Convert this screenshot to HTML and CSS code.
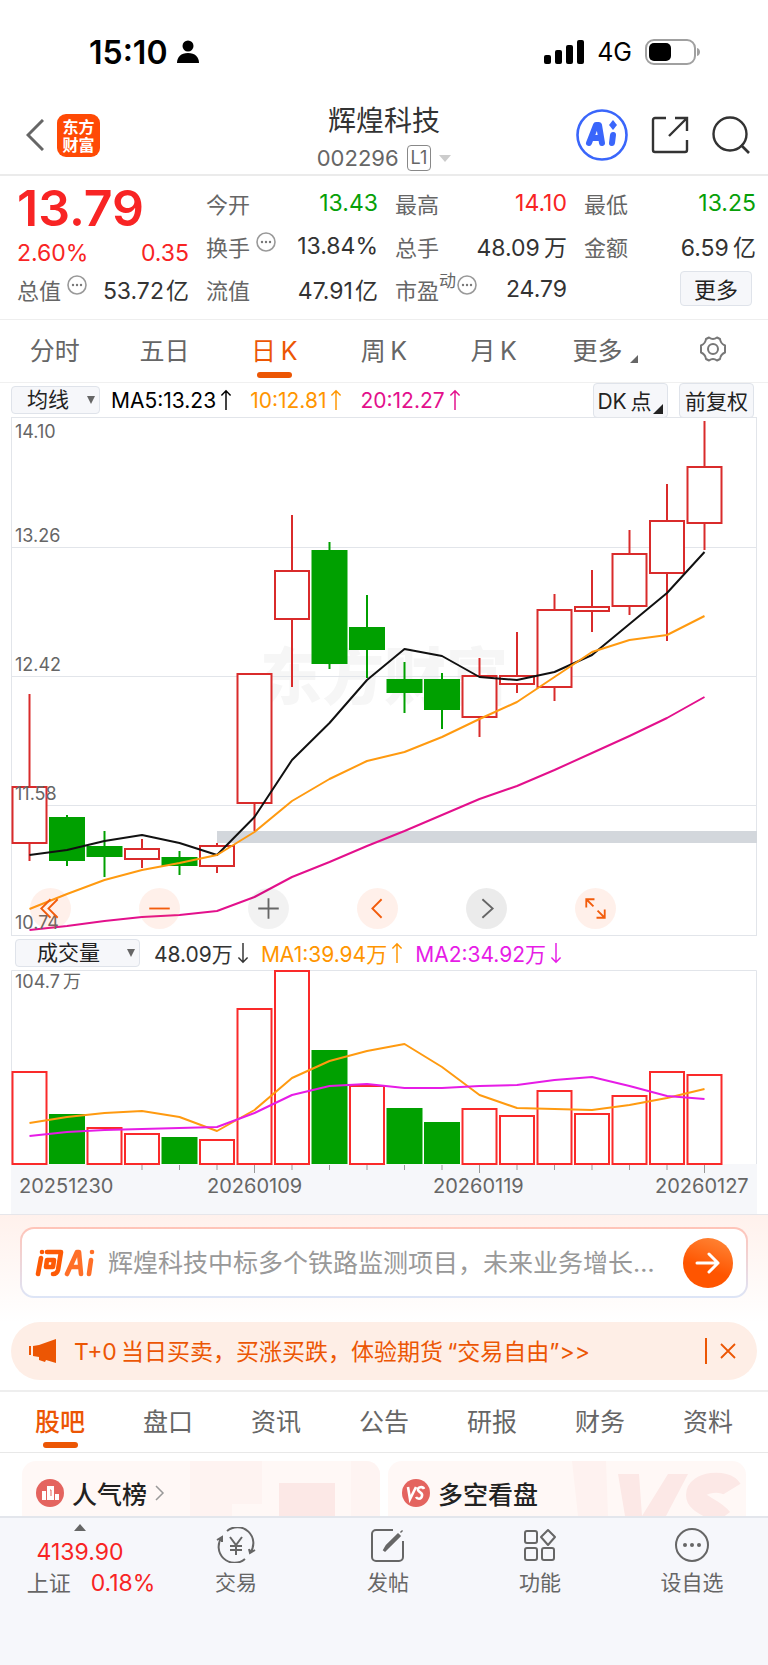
FILE: index.html
```html
<!DOCTYPE html>
<html lang="zh-CN">
<head>
    <meta charset="UTF-8">
    <meta name="viewport" content="width=device-width, initial-scale=1.0">
    <title>辉煌科技 002296</title>
    <link rel="stylesheet" href="styles.css">
</head>
<body>
    <svg class="defs" aria-hidden="true">
        <symbol id="up" viewBox="0 0 12 24"><path d="M6 23V2M1 7l5-5 5 5" fill="none" stroke="currentColor" stroke-width="1.6"/></symbol>
        <symbol id="down" viewBox="0 0 12 24"><path d="M6 1v21M1 17l5 5 5-5" fill="none" stroke="currentColor" stroke-width="1.6"/></symbol>
        <symbol id="dots" viewBox="0 0 20 20"><circle cx="10" cy="10" r="9" fill="none" stroke="#999" stroke-width="1.6"/><g fill="#777"><circle cx="6" cy="10" r="1.2"/><circle cx="10" cy="10" r="1.2"/><circle cx="14" cy="10" r="1.2"/></g></symbol>
    </svg>

    <div class="status">
        <div class="clock">15:10
            <svg width="22" height="24" viewBox="0 0 22 24"><circle cx="11" cy="6" r="5.5"/><path d="M0 23c0-6 4-10 11-10s11 4 11 10z"/></svg>
        </div>
        <div class="signal">
            <svg width="40" height="25" viewBox="0 0 40 25"><rect x="0" y="15" width="7" height="9" rx="2"/><rect x="11" y="10" width="7" height="14" rx="2"/><rect x="22" y="5" width="7" height="19" rx="2"/><rect x="33" y="0" width="7" height="24" rx="2"/></svg>
            <span>4G</span>
            <svg width="56" height="26" viewBox="0 0 56 26"><rect x="1" y="1" width="49" height="24" rx="8" fill="none" stroke="#a0a0a0" stroke-width="2"/><rect x="4" y="4" width="22" height="18" rx="5"/><path d="M52 9c4 1 4 7 0 8z" fill="#a0a0a0"/></svg>
        </div>
    </div>

    <header class="header">
        <div class="header-left">
            <button class="icon-button back" aria-label="返回"><svg width="18" height="32" viewBox="0 0 18 32"><path d="M17 1L2 16l15 15" fill="none" stroke="#666" stroke-width="3"/></svg></button>
            <a class="logo" href="#">东方<br>财富</a>
        </div>
        <div class="header-title">
            <h1>辉煌科技</h1>
            <p>002296 <span class="level">L1</span> <span class="caret-light"></span></p>
        </div>
        <div class="header-right">
            <button class="icon-button" aria-label="Ai">
                <svg width="52" height="52" viewBox="0 0 52 52"><circle cx="26" cy="26" r="24.5" fill="#fff" stroke="#3a66fb" stroke-width="2.6"/><g fill="none" stroke="#3a66fb" stroke-width="6" stroke-linecap="round" stroke-linejoin="round"><path d="M13 34l7-18h3l3 18M17 29h8"/><path d="M37 26l-1 8"/></g><path d="M37 11l4 5-4 5-4-5z" fill="#3a66fb"/></svg>
            </button>
            <button class="icon-button" aria-label="分享">
                <svg width="38" height="38" viewBox="0 0 38 38"><path d="M15 2H4a2 2 0 0 0-2 2v30a2 2 0 0 0 2 2h30a2 2 0 0 0 2-2V24M24 2h12v13M36 2L18 20" fill="none" stroke="#333" stroke-width="2.4"/></svg>
            </button>
            <button class="icon-button" aria-label="搜索">
                <svg width="38" height="38" viewBox="0 0 38 38"><circle cx="18" cy="18" r="16.5" fill="none" stroke="#333" stroke-width="2.4"/><path d="M29 29l8 8" stroke="#333" stroke-width="2.6"/></svg>
            </button>
        </div>
    </header>

    <section class="quote">
        <div class="quote-price">
            <strong>13.79</strong>
            <p><span>2.60%</span><span>0.35</span></p>
        </div>
        <div class="cell"><span>今开</span><b class="green">13.43</b></div>
        <div class="cell"><span>最高</span><b class="red">14.10</b></div>
        <div class="cell"><span>最低</span><b class="green">13.25</b></div>
        <div class="cell"><span>换手<svg class="info"><use href="#dots"/></svg></span><b>13.84%</b></div>
        <div class="cell"><span>总手</span><b>48.09&thinsp;万</b></div>
        <div class="cell"><span>金额</span><b>6.59&thinsp;亿</b></div>
        <div class="cell"><span>总值<svg class="info"><use href="#dots"/></svg></span><b>53.72&hairsp;亿</b></div>
        <div class="cell"><span>流值</span><b>47.91&hairsp;亿</b></div>
        <div class="cell"><span>市盈<sup>动</sup><svg class="info info-tight"><use href="#dots"/></svg></span><b>24.79</b></div>
        <div class="cell cell-more"><button class="box-button more-button">更多</button></div>
    </section>

    <nav class="tabs period-tabs">
        <button>分时</button>
        <button>五日</button>
        <button class="active">日&thinsp;K</button>
        <button>周&thinsp;K</button>
        <button>月&thinsp;K</button>
        <button class="has-corner">更多</button>
        <button aria-label="设置">
            <svg width="30" height="30" viewBox="0 0 30 30" fill="none" stroke="#777" stroke-width="2" stroke-linejoin="round"><path d="M11 3.500Q15 6.500 19 3.500L22 5Q22.500 9.500 27 11.500V18.500Q22.500 20.500 22 25L19 26.500Q15 23.500 11 26.500L8 25Q7.500 20.500 3 18.500V11.500Q7.500 9.500 8 5Z"/><circle cx="15" cy="15" r="5"/></svg>
        </button>
    </nav>

    <div class="toolbar">
        <label class="picker picker-ma"><select class="box-button" aria-label="主图指标"><option>均线</option></select></label>
        <span class="ma ma-black">MA5:13.23<svg class="arrow"><use href="#up"/></svg></span>
        <span class="ma ma-orange">10:12.81<svg class="arrow"><use href="#up"/></svg></span>
        <span class="ma ma-pink">20:12.27<svg class="arrow"><use href="#up"/></svg></span>
        <div class="toolbar-right">
            <button class="box-button corner-button">DK&thinsp;点</button>
            <button class="box-button">前复权</button>
        </div>
    </div>

    <div class="chart">
        <svg id="priceChart" viewBox="0 417 768 519"></svg>
        <div class="chart-buttons">
            <button class="round" aria-label="最早"><svg viewBox="0 0 40 40"><path d="M20 11l-9 9 9 9M27 11l-9 9 9 9"/></svg></button>
            <button class="round" aria-label="缩小"><svg viewBox="0 0 40 40"><path d="M10 20h20"/></svg></button>
            <button class="round round-grey" aria-label="放大"><svg viewBox="0 0 40 40"><path d="M10 20h20M20 10v20"/></svg></button>
            <button class="round" aria-label="向前"><svg viewBox="0 0 40 40"><path d="M24 11l-9 9 9 9"/></svg></button>
            <button class="round round-dark" aria-label="向后"><svg viewBox="0 0 40 40"><path d="M16 11l10 9-10 9"/></svg></button>
            <button class="round" aria-label="全屏"><svg viewBox="0 0 40 40"><path d="M18 18l-7-7M11 19v-8h8M22 22l7 7M29 21v8h-8"/></svg></button>
        </div>
    </div>

    <div class="toolbar toolbar-volume">
        <label class="picker picker-volume"><select class="box-button" aria-label="副图指标"><option>成交量</option></select></label>
        <span class="ma">48.09万<svg class="arrow"><use href="#down"/></svg></span>
        <span class="ma ma-orange">MA1:39.94万<svg class="arrow"><use href="#up"/></svg></span>
        <span class="ma ma-magenta">MA2:34.92万<svg class="arrow"><use href="#down"/></svg></span>
    </div>

    <div class="chart">
        <svg id="volumeChart" viewBox="0 970 768 244"></svg>
    </div>

    <section class="ask">
        <form class="ask-box">
            <svg class="ask-logo" width="60" height="28" viewBox="0 0 60 28" fill="none" stroke="#fd5a05" stroke-width="4.6" stroke-linecap="round" stroke-linejoin="round">
                <path d="M6 9L3 25M7 3v0M12 3h14l-3 18q-1 4-5 4M12 11h7l-1 7h-7z"/>
                <g stroke="#ff6f28"><path d="M32 25L42 3h2l2 22M37 18h8"/><path d="M56 11l-2 14M57 3v0"/></g>
            </svg>
            <input type="text" aria-label="问Ai" placeholder="辉煌科技中标多个铁路监测项目，未来业务增长…">
            <button type="button" class="send" aria-label="发送"><svg width="26" height="22" viewBox="0 0 26 22"><path d="M2 11h21M14 2l9 9-9 9" fill="none" stroke="#fff" stroke-width="3" stroke-linecap="round" stroke-linejoin="round"/></svg></button>
        </form>
    </section>

    <div class="notice">
        <svg width="27" height="24" viewBox="0 0 27 24" fill="#ec5604"><path d="M0 7h2v9H0zM4 7l6-1L27 0v24l-10-3-1 2-6-2v-3l-6-1z"/></svg>
        <a href="#">T+0&thinsp;当日买卖，买涨买跌，体验期货&thinsp;“交易自由”&gt;&gt;</a>
        <button class="icon-button notice-close" aria-label="关闭"><svg width="16" height="16" viewBox="0 0 16 16"><path d="M1 1l14 14M15 1L1 15" stroke="#ec5604" stroke-width="1.8"/></svg></button>
    </div>

    <nav class="tabs info-tabs">
        <button class="active">股吧</button>
        <button>盘口</button>
        <button>资讯</button>
        <button>公告</button>
        <button>研报</button>
        <button>财务</button>
        <button>资料</button>
    </nav>

    <section class="cards">
        <a class="card" href="#">
            <svg class="card-art" width="190" height="55" viewBox="0 0 190 55"><path d="M0 0h72v43H42v12H0z" fill="#fef3f1"/><path d="M89 22h56v33H89z" fill="#fce8e6"/><path d="M161 0h29v55h-29z" fill="#fef4f2"/></svg>
            <svg width="28" height="28" viewBox="0 0 28 28"><circle cx="14" cy="14" r="14" fill="#e4645f"/><path d="M6 12h4v9H6zM11 7h7v14h-7zM19 15h4v6h-4z" fill="#fff"/><path d="M14 11h1v6" fill="none" stroke="#e4645f"/></svg>
            <span>人气榜</span>
            <svg width="10" height="16" viewBox="0 0 10 16"><path d="M1 1l7 7-7 7" fill="none" stroke="#999" stroke-width="1.5"/></svg>
        </a>
        <a class="card" href="#">
            <svg class="card-art" width="180" height="55" viewBox="0 0 180 55"><path d="M6 0h34l2 55H12z" fill="#fef2f0"/><path d="M52 13h21l3 42H59zM102 13h20L100 55H76z" fill="#fce8e6"/><path d="M166 28c-6-10-36-8-36 6 0 10 18 12 26 23" fill="none" stroke="#fce8e6" stroke-width="20"/></svg>
            <svg width="28" height="28" viewBox="0 0 28 28"><circle cx="14" cy="14" r="14" fill="#e4645f"/><path d="M6 8l2 12 6-12M22 10c-1-3-7-2-6 1s5 2 4 6-5 3-6 1" fill="none" stroke="#fff" stroke-width="2.6"/></svg>
            <span>多空看盘</span>
        </a>
    </section>

    <footer class="bottom">
        <a class="index" href="#">
            <i></i>
            <span class="red">4139.90</span>
            <span class="index-row">上证<span class="red">0.18%</span></span>
        </a>
        <a href="#">
            <svg width="40" height="36" viewBox="0 0 40 36"><path d="M11 4a16 16 0 0 1 23 22M29 32A16 16 0 0 1 6 10M1 13l5-3v5M39 23l-5 3-1-4M14 10l6 8 6-8M20 18v10M14 19h12M14 23h12"/></svg>
            交易
        </a>
        <a href="#">
            <svg width="36" height="36" viewBox="0 0 36 36"><path d="M23 3H6a4 4 0 0 0-4 4v23a4 4 0 0 0 4 4h23a4 4 0 0 0 4-4V14"/><path d="M14 24l3-5L28 8l1 1-11 11zM31 4l1 1" stroke-width="3"/></svg>
            发帖
        </a>
        <a href="#">
            <svg width="36" height="36" viewBox="0 0 36 36"><rect x="3" y="4" width="12" height="12" rx="2"/><rect x="3" y="21" width="12" height="12" rx="2"/><rect x="20" y="21" width="12" height="12" rx="2"/><path d="M26 3l7 7-7 8-7-8z" stroke-linejoin="round"/></svg>
            功能
        </a>
        <a href="#">
            <svg width="36" height="36" viewBox="0 0 36 36"><circle cx="18" cy="18" r="16"/><g fill="#666" stroke="none"><circle cx="11" cy="18" r="2"/><circle cx="18" cy="18" r="2"/><circle cx="25" cy="18" r="2"/></g></svg>
            设自选
        </a>
    </footer>

    <script src="chart.js"></script>
</body>
</html>
```
FILE: styles.css
```css
* {
    box-sizing: border-box;
}
body {
    margin: 0;
    background: #fff;
    color: #333;
    font-family: Inter, 'Noto Sans CJK SC', sans-serif;
    font-size: 22px;
}
h1, p {
    margin: 0;
}
a {
    color: inherit;
    text-decoration: none;
}
button, select, input {
    font-family: inherit;
    color: inherit;
    margin: 0;
}
svg {
    display: block;
    flex-shrink: 0;
}
.defs {
    position: absolute;
    width: 0;
    height: 0;
}
.red {
    color: #f82424;
}
.green {
    color: #08a008;
}

/* status bar */
.status {
    display: flex;
    justify-content: space-between;
    align-items: center;
    height: 104px;
    padding: 0 67px 0 89px;
    color: #000;
}
.clock, .signal {
    display: flex;
    align-items: center;
}
.clock {
    gap: 9px;
    font-size: 32px;
    font-weight: 600;
}
.signal {
    gap: 13px;
    font-size: 25px;
}

/* header */
.header {
    display: grid;
    grid-template-columns: 1fr auto 1fr;
    height: 72px;
    padding: 0 18px 12px;
    border-bottom: 2px solid #ebebeb;
}
.icon-button {
    padding: 0;
    border: none;
    background: none;
    cursor: pointer;
}
.header-left, .header-right {
    display: flex;
    align-items: center;
    height: 62px;
}
.header-left {
    gap: 13px;
    padding-left: 8px;
}
.header-right {
    justify-content: flex-end;
    gap: 23px;
}
.logo {
    width: 43px;
    height: 43px;
    padding-top: 4px;
    border-radius: 9px;
    background: #ff4a05;
    color: #fff;
    font-size: 16px;
    font-weight: 700;
    line-height: 18px;
    text-align: center;
}
.header-title {
    text-align: center;
}
.header-title h1 {
    font-size: 28px;
    font-weight: 400;
    line-height: 34px;
}
.header-title p {
    display: flex;
    align-items: center;
    justify-content: center;
    gap: 8px;
    margin-top: 7px;
    color: #666;
    line-height: 26px;
}
.level {
    padding: 0 3px;
    border: 1px solid #888;
    border-radius: 4px;
    font-size: 18px;
    line-height: 24px;
}
.caret-light {
    border: 6px solid transparent;
    border-top: 7px solid #ccc;
    border-bottom: none;
}

/* quote */
.quote {
    display: grid;
    grid-template-columns: repeat(4, 1fr);
    grid-auto-rows: 43px;
    column-gap: 17px;
    padding: 5px 12px 9px 17px;
    border-bottom: 1px solid #eee;
}
.quote-price {
    grid-row: span 2;
    padding-top: 2px;
    color: #f82424;
}
.quote-price strong {
    display: block;
    font-size: 50px;
    font-weight: 600;
    line-height: 50px;
}
.quote-price p {
    display: flex;
    justify-content: space-between;
    padding-top: 5px;
    font-size: 23px;
    line-height: 30px;
}
.cell {
    display: flex;
    align-items: center;
    justify-content: space-between;
    white-space: nowrap;
}
.cell span {
    display: flex;
    align-items: center;
    color: #666;
}
.cell b {
    font-size: 23px;
    font-weight: 400;
}
.cell sup {
    font-size: 17px;
    line-height: 17px;
    margin-bottom: 14px;
}
.info {
    width: 20px;
    height: 20px;
    margin: 0 0 8px 6px;
}
.info-tight {
    margin-left: 1px;
}
.cell-more {
    justify-content: flex-end;
    padding-right: 4px;
}
.box-button {
    border: 1px solid #dfe3ea;
    border-radius: 4px;
    background: #f6f7fa;
    color: #222;
    font-size: 21px;
    cursor: pointer;
}
.more-button {
    width: 72px;
    height: 35px;
    padding: 0 0 3px;
    font-size: 22px;
}

/* tabs */
.tabs {
    display: grid;
    grid-template-columns: repeat(7, 1fr);
    height: 63px;
}
.tabs button {
    position: relative;
    display: flex;
    align-items: center;
    justify-content: center;
    padding: 0 0 4px;
    border: none;
    background: none;
    color: #666;
    font-size: 25px;
    cursor: pointer;
}
.tabs .active {
    color: #ec5604;
}
.tabs .active::after {
    content: '';
    position: absolute;
    bottom: 4px;
    width: 35px;
    height: 6px;
    border-radius: 3px;
    background: #ec5604;
}
.period-tabs {
    border-bottom: 1px solid #f0f0f0;
}
.tabs .has-corner {
    padding-left: 4px;
}
.has-corner::after {
    content: '';
    align-self: flex-end;
    margin: 0 0 15px 8px;
    border-left: 8px solid transparent;
    border-bottom: 8px solid #666;
}
.info-tabs {
    padding: 0 6px;
    border-top: 2px solid #eee;
    border-bottom: 1px solid #e8e8e8;
}
.info-tabs .active {
    font-weight: 500;
}

/* indicator rows */
.toolbar {
    display: flex;
    align-items: center;
    height: 34px;
    padding: 0 14px 0 11px;
    white-space: nowrap;
}
.picker {
    position: relative;
    margin-right: 11px;
}
.picker select {
    appearance: none;
    width: 100%;
    height: 28px;
    padding: 0 15px;
    line-height: 24px;
}
.picker::after {
    content: '';
    position: absolute;
    right: 5px;
    top: 10px;
    border: 4px solid transparent;
    border-top: 8px solid #666;
    border-bottom: none;
}
.picker-ma {
    width: 89px;
}
.picker-volume {
    width: 125px;
    margin-right: 14px;
}
.picker-volume select {
    padding-left: 21px;
}
.ma {
    display: flex;
    align-items: center;
    gap: 4px;
    margin-right: 18px;
    font-size: 21px;
}
.toolbar-volume {
    padding-left: 15px;
}
.toolbar-volume .ma {
    margin-right: 12px;
}
.arrow {
    width: 12px;
    height: 22px;
}
.ma-black {
    color: #000;
}
.ma-orange {
    color: #ff9500;
}
.ma-pink {
    color: #e3108c;
}
.ma-magenta {
    color: #e61ce6;
}
.toolbar-right {
    display: flex;
    gap: 11px;
    margin-left: auto;
}
.toolbar-right .box-button {
    position: relative;
    width: 75px;
    height: 35px;
    padding: 0;
}
.toolbar-right .corner-button {
    padding-right: 12px;
}
.corner-button::after {
    content: '';
    position: absolute;
    right: 4px;
    bottom: 3px;
    border-left: 10px solid transparent;
    border-bottom: 10px solid #222;
}

/* charts */
.chart {
    position: relative;
}
.chart > svg {
    width: 100%;
    height: auto;
}
.frame {
    fill: none;
    stroke: #e2e5ea;
}
.watermark {
    fill: #f6f6f6;
    font-size: 62px;
    font-weight: 900;
}
.axis-label {
    fill: #666;
    font-size: 18px;
}
.date-label {
    fill: #666;
    font-size: 20px;
}
.line {
    fill: none;
    stroke-width: 2;
    stroke-linejoin: round;
}
.chart-buttons {
    position: absolute;
    left: 30px;
    bottom: 7px;
    display: flex;
    gap: 68px;
}
.round {
    width: 41px;
    height: 41px;
    padding: 0;
    border: none;
    border-radius: 50%;
    background: rgba(255, 110, 50, 0.1);
    color: #f25c0c;
    cursor: pointer;
}
.round svg {
    fill: none;
    stroke: currentColor;
    stroke-width: 1.8;
}
.round-grey {
    background: rgba(0, 0, 0, 0.05);
    color: #666;
}
.round-dark {
    background: rgba(0, 0, 0, 0.08);
    color: #666;
}

/* ask box */
.ask {
    padding: 12px 20px 24px;
    border-top: 1px solid #e6e6ea;
    background: linear-gradient(#fff1ec, #fff);
}
.ask-box {
    display: flex;
    align-items: center;
    height: 71px;
    padding: 0 13px;
    border: 2px solid transparent;
    border-radius: 14px;
    background: linear-gradient(#fff, #fff) padding-box, linear-gradient(#ffc4b8, #dde5f7) border-box;
}
.ask-box input {
    flex: 1;
    min-width: 0;
    margin: 0 16px 0 13px;
    padding: 0;
    border: none;
    outline: none;
    background: none;
    font-size: 25px;
}
.ask-box input::placeholder {
    color: #999;
    opacity: 1;
}
.send {
    display: flex;
    align-items: center;
    justify-content: center;
    width: 50px;
    height: 50px;
    padding: 0;
    border: none;
    border-radius: 50%;
    background: linear-gradient(200deg, #ff8a3c, #ff5500 60%);
    cursor: pointer;
}

/* notice */
.notice {
    display: flex;
    align-items: center;
    height: 58px;
    margin: 0 11px 10px;
    padding: 0 21px 0 18px;
    border-radius: 29px;
    background: #feeee6;
    color: #ec5604;
    font-size: 23px;
    white-space: nowrap;
}
.notice a {
    margin-left: 18px;
    padding-bottom: 2px;
}
.notice-close {
    margin-left: auto;
    padding: 5px 0 5px 13px;
    border-left: 2px solid #ec5604;
}

/* cards */
.cards {
    display: grid;
    grid-template-columns: 1fr 1fr;
    gap: 8px;
    padding: 8px 22px 0;
}
.card {
    position: relative;
    display: flex;
    align-items: center;
    gap: 8px;
    height: 55px;
    padding: 8px 14px 0;
    border-radius: 14px 14px 0 0;
    background: #fff8f6;
    color: #222;
    font-size: 25px;
    font-weight: 500;
    overflow: hidden;
}
.card-art {
    position: absolute;
    right: 0;
    top: 0;
}

/* bottom bar */
.bottom {
    display: grid;
    grid-template-columns: 160px repeat(4, 1fr);
    height: 149px;
    border-top: 2px solid #e3e6ec;
    background: #f6f7fb;
    color: #666;
    font-size: 21px;
}
.bottom a {
    display: flex;
    flex-direction: column;
    align-items: center;
    gap: 5px;
    padding-top: 9px;
    line-height: 30px;
}
.bottom svg {
    fill: none;
    stroke: #666;
    stroke-width: 2;
}
.bottom .index {
    gap: 0;
    padding-top: 6px;
    font-size: 22px;
}
.index .red {
    font-size: 23px;
}
.index i {
    margin-bottom: 6px;
    border: 6px solid transparent;
    border-top: none;
    border-bottom: 7px solid #666;
}
.index-row {
    display: flex;
    gap: 20px;
    padding: 1px 0 0 22px;
}
```
FILE: chart.js
```js
const RED = '#d92b2b';
const GREEN = '#00a000';
const STEP = 37.5;
const FIRST = 29.5;
const BASE = 1164;

// high, body top, body bottom, low, rising
const candles = [
    [694, 787, 843, 861, 1],
    [815, 817, 861, 866, 0],
    [831, 846, 857, 877, 0],
    [839, 849, 859, 868, 1],
    [851, 857, 866, 875, 0],
    [843, 846, 866, 873, 1],
    [674, 674, 803, 831, 1],
    [515, 571, 619, 687, 1],
    [542, 550, 664, 669, 0],
    [595, 627, 650, 678, 0],
    [662, 679, 693, 713, 0],
    [673, 679, 710, 729, 0],
    [658, 676, 717, 737, 1],
    [632, 676, 684, 693, 1],
    [594, 610, 687, 701, 1],
    [570, 607, 611, 632, 1],
    [530, 554, 606, 615, 1],
    [484, 521, 573, 641, 1],
    [421, 467, 523, 550, 1]
];
const ma5 = [855, 850, 841, 835, 843, 855, 817, 760, 723, 680, 649, 656, 677, 680, 672, 655, 624, 593, 552];
const ma10 = [909, 894, 880, 870, 863, 855, 832, 801, 779, 761, 752, 737, 719, 702, 677, 652, 640, 635, 616];
const ma20 = [930, 926, 921, 917, 915, 911, 897, 877, 862, 846, 831, 815, 799, 786, 770, 753, 736, 718, 697];

const volumes = [1072, 1114, 1128, 1134, 1137, 1140, 1009, 971, 1050, 1086, 1108, 1122, 1109, 1116, 1091, 1114, 1096, 1072, 1075];
const falling = [1, 4, 8, 10, 11];
const vma1 = [1123, 1117, 1113, 1111, 1117, 1131, 1110, 1078, 1061, 1051, 1044, 1067, 1095, 1108, 1109, 1110, 1105, 1098, 1089];
const vma2 = [1136, 1132, 1130, 1129, 1128, 1127, 1113, 1095, 1086, 1084, 1088, 1088, 1086, 1085, 1080, 1077, 1086, 1096, 1099];

function x(i) {
    return FIRST + i * STEP;
}

function line(values, color) {
    const points = values.map((y, i) => `${x(i)},${y}`).join(' ');
    return `<polyline class="line" points="${points}" stroke="${color}"/>`;
}

function box(i, top, bottom, rising, color) {
    if (rising) {
        return `<rect x="${x(i) - 17}" y="${top}" width="34" height="${bottom - top}" fill="#fff" stroke="${color}" stroke-width="2"/>`;
    }
    return `<rect x="${x(i) - 18}" y="${top}" width="36" height="${bottom - top}" fill="${GREEN}"/>`;
}

function drawPrice() {
    let out = '<rect class="frame" x="11.5" y="417.5" width="745" height="518"/>';
    out += '<text class="watermark" x="260" y="700">东方财富</text>';
    [547.5, 676.5, 805.5].forEach(y => {
        out += `<path class="frame" d="M11.5 ${y}h745"/>`;
    });
    out += '<rect x="217" y="831" width="540" height="12" fill="#d3d7dc"/>';
    candles.forEach(([high, top, bottom, low, rising], i) => {
        out += `<path d="M${x(i)} ${high}V${low}" stroke="${rising ? RED : GREEN}" stroke-width="2"/>`;
        out += box(i, top, bottom, rising, RED);
    });
    out += line(ma5, '#111') + line(ma10, '#ff9a10') + line(ma20, '#e3108c');
    [['14.10', 438], ['13.26', 542], ['12.42', 671], ['11.58', 800], ['10.74', 929]].forEach(([label, y]) => {
        out += `<text class="axis-label" x="15" y="${y}">${label}</text>`;
    });
    document.getElementById('priceChart').innerHTML = out;
}

function drawVolume() {
    let out = `<rect x="11" y="${BASE}" width="746" height="50" fill="#f6f7fa"/>`;
    out += '<path class="frame" d="M11.5 1164V970.5H756.5V1164"/>';
    volumes.forEach((top, i) => {
        out += box(i, top, BASE, !falling.includes(i), '#fa2a2a');
        if (i > 2) {
            out += `<path d="M${x(i)} ${BASE + 1}v${i % 6 ? 5 : 8}" stroke="#999"/>`;
        }
    });
    out += line(vma1, '#ff9a10') + line(vma2, '#e61ce6');
    out += '<text class="axis-label" x="15" y="988">104.7&thinsp;万</text>';
    [['20251230', 19], ['20260109', 207], ['20260119', 433], ['20260127', 655]].forEach(([date, left]) => {
        out += `<text class="date-label" x="${left}" y="1193">${date}</text>`;
    });
    document.getElementById('volumeChart').innerHTML = out;
}

drawPrice();
drawVolume();
```
